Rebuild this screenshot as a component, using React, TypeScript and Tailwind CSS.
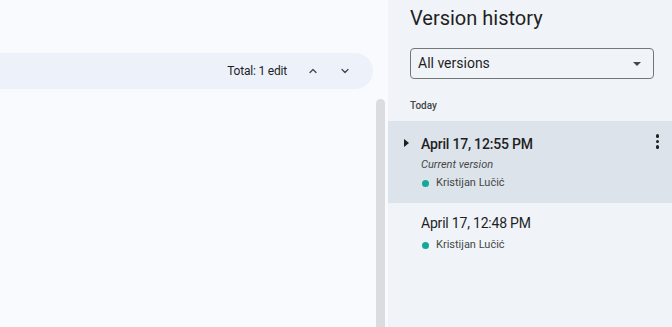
const versions = [
  { time: "April 17, 12:55 PM", author: "Kristijan Lučić", current: true },
  { time: "April 17, 12:48 PM", author: "Kristijan Lučić", current: false },
];

function Chevron({ up }: { up?: boolean }) {
  return (
    <svg width="12" height="12" viewBox="0 0 24 24" className="text-[#444746]">
      <path
        d={up ? "M6 15l6-6 6 6" : "M6 9l6 6 6-6"}
        fill="none"
        stroke="currentColor"
        strokeWidth="2.6"
        strokeLinecap="round"
        strokeLinejoin="round"
      />
    </svg>
  );
}

function VersionRow({ v }: { v: (typeof versions)[number] }) {
  return (
    <div className={`relative pl-[33px] pr-3 ${v.current ? "bg-[#dde3ea] pt-[12px] pb-[13px]" : "pt-[9px] pb-3"}`}>
      {v.current && (
        <svg width="6" height="8" viewBox="0 0 6 8" className="absolute left-[16px] top-[18px]">
          <path d="M0 0L5 4L0 8Z" fill="#1f1f1f" />
        </svg>
      )}
      <div
        className={`text-[14px] leading-[22px] tracking-[-0.2px] text-[#1f1f1f] ${v.current ? "font-medium" : ""}`}
      >
        {v.time}
      </div>
      {v.current && <div className="mt-[3px] text-[11px] italic leading-[14px] text-[#444746]">Current version</div>}
      <div className="mt-[4px] flex items-center gap-[7px] text-[11px] leading-[14px] text-[#444746]">
        <span className="ml-[1px] h-[7px] w-[7px] rounded-full bg-[#14a89a]" />
        {v.author}
      </div>
      {v.current && (
        <div className="absolute right-[13px] top-[13px] flex flex-col gap-[2px]">
          <span className="h-[3.5px] w-[3.5px] rounded-full bg-[#1f1f1f]" />
          <span className="h-[3.5px] w-[3.5px] rounded-full bg-[#1f1f1f]" />
          <span className="h-[3.5px] w-[3.5px] rounded-full bg-[#1f1f1f]" />
        </div>
      )}
    </div>
  );
}

export default function App() {
  return (
    <div className="flex h-[327px] w-[672px] overflow-hidden bg-[#f8fafd] font-['Roboto',sans-serif]">
      <div className="flex w-[388px] flex-col">
        <div className="mt-[53px] flex h-[36px] w-[373px] items-center justify-end rounded-r-full bg-[#edf2fa] pr-[16px]">
          <span className="mr-[14px] text-[12px] tracking-[-0.2px] text-[#1f1f1f]">Total: 1 edit</span>
          <span className="flex h-6 w-6 items-center justify-center">
            <Chevron up />
          </span>
          <span className="ml-[8px] flex h-6 w-6 items-center justify-center">
            <Chevron />
          </span>
        </div>
        <div className="flex flex-1 justify-end pr-[3px] pt-[10px]">
          <div className="h-full w-[9px] rounded-t-full bg-[#dadce0]" />
        </div>
      </div>

      <div className="flex flex-1 flex-col bg-[#f0f4f9]">
        <h1 className="ml-[22px] mt-[5px] text-[20px] leading-[26px] text-[#1f1f1f]">Version history</h1>
        <div className="ml-[22px] mr-[18px] mt-[17px] flex h-[31px] items-center justify-between rounded-[4px] border border-[#747775] pl-[7px] pr-[12px]">
          <span className="text-[14px] text-[#1f1f1f]">All versions</span>
          <svg width="8" height="4" viewBox="0 0 8 4">
            <path d="M0 0H8L4 4Z" fill="#444746" />
          </svg>
        </div>
        <div className="ml-[22px] mt-[19px] text-[10px] font-medium text-[#444746]">Today</div>
        <div className="mt-[8px] flex flex-col">
          {versions.map((v) => (
            <VersionRow key={v.time} v={v} />
          ))}
        </div>
      </div>
    </div>
  );
}
